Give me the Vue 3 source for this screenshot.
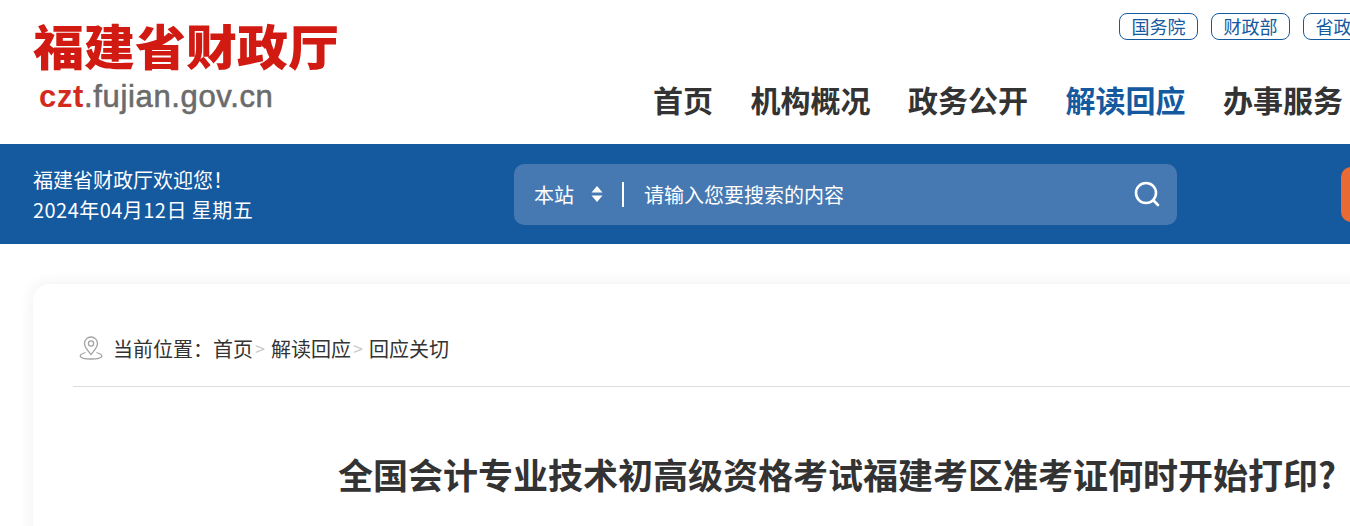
<template>
  <div class="page">
    <header class="top">
      <a class="logo" href="#">
        <span class="logo-name">福建省财政厅</span>
        <span class="logo-url"><b>czt</b>.fujian.gov.cn</span>
      </a>
      <div class="top-right">
        <div class="links">
          <a v-for="item in links" :key="item" class="link-pill" href="#">{{ item }}</a>
        </div>
        <nav class="nav">
          <a
            v-for="item in navs"
            :key="item"
            href="#"
            class="nav-item"
            :class="{ active: item === '解读回应' }"
          >{{ item }}</a>
        </nav>
      </div>
    </header>

    <section class="band">
      <div class="welcome">
        <p>福建省财政厅欢迎您！</p>
        <p class="date">2024年04月12日 星期五</p>
      </div>
      <form class="search" @submit.prevent>
        <span class="scope">本站</span>
        <svg class="scope-arrows" width="12" height="18" viewBox="0 0 12 18">
          <path d="M6 1 L11.5 7.5 H0.5 Z" fill="#fff" />
          <path d="M0.5 10.5 H11.5 L6 17 Z" fill="#fff" />
        </svg>
        <i class="divider"></i>
        <input v-model="keyword" class="search-input" placeholder="请输入您要搜索的内容" />
        <svg class="search-icon" width="26" height="26" viewBox="0 0 26 26" fill="none" stroke="#fff" stroke-linecap="round">
          <circle cx="12" cy="12" r="10" stroke-width="2.6" />
          <path d="M19.5 19.5 L24 24" stroke-width="2.6" />
        </svg>
      </form>
      <a class="orange-btn" href="#"></a>
    </section>

    <main class="card">
      <div class="crumbs">
        <svg class="pin" width="24" height="24" viewBox="0 0 24 24" fill="none" stroke="#a3a3a3" stroke-width="1.3">
          <path d="M12 18.5 C8.5 14 5.5 11.5 5.5 7.5 A6.5 6.5 0 0 1 18.5 7.5 C18.5 11.5 15.5 14 12 18.5 Z" />
          <circle cx="12" cy="7.5" r="2.6" />
          <path d="M6.5 16.5 C3 17.5 1.2 18.8 1.2 20 C1.2 22 6 23 12 23 C18 23 22.8 22 22.8 20 C22.8 18.8 21 17.5 17.5 16.5" />
        </svg>
        <span class="crumb-label">当前位置：</span>
        <template v-for="(c, i) in crumbs" :key="c">
          <a href="#" class="crumb">{{ c }}</a>
          <span v-if="i < crumbs.length - 1" class="crumb-sep">&gt;</span>
        </template>
      </div>
      <h1 class="title">全国会计专业技术初高级资格考试福建考区准考证何时开始打印?</h1>
    </main>
  </div>
</template>

<script setup>
import { ref } from 'vue'

const keyword = ref('')
const links = ['国务院', '财政部', '省政府']
const navs = ['首页', '机构概况', '政务公开', '解读回应', '办事服务']
const crumbs = ['首页', '解读回应', '回应关切']
</script>

<style>
html,
body {
  margin: 0;
  background: #fff;
  overflow: hidden;
}
</style>

<style scoped>
.page {
  width: 1674px;
  font-family: "Noto Sans CJK SC", "Liberation Sans", sans-serif;
  color: #333;
}

a {
  color: inherit;
  text-decoration: none;
}

.top {
  display: flex;
  height: 144px;
  padding-left: 33px;
}

.logo {
  display: flex;
  flex-direction: column;
  width: 620px;
  flex-shrink: 0;
}

.logo-name {
  margin-top: 15px;
  height: 62px;
  font-size: 51px;
  line-height: 62px;
  font-weight: 900;
  color: #d11a12;
  white-space: nowrap;
  transform: scaleY(0.94);
  transform-origin: left top;
}

.logo-url {
  margin-top: 2px;
  padding-left: 6px;
  font-family: "Liberation Sans", sans-serif;
  font-size: 31px;
  line-height: 36px;
  letter-spacing: 0.65px;
  color: #6b6b6b;
  -webkit-text-stroke: 0.6px #6b6b6b;
}

.logo-url b {
  color: #d42a1e;
  -webkit-text-stroke: 0;
}

.links {
  display: flex;
  gap: 13px;
  margin: 13px 0 0 466px;
}

.link-pill {
  box-sizing: border-box;
  width: 79px;
  height: 27px;
  border: 1px solid #155a9f;
  border-radius: 8px;
  font-size: 18px;
  line-height: 25px;
  text-align: center;
  color: #155a9f;
  white-space: nowrap;
}

.nav {
  display: flex;
  gap: 37.5px;
  margin-top: 37px;
}

.nav-item {
  font-size: 30px;
  line-height: 44px;
  font-weight: 700;
  white-space: nowrap;
}

.nav-item.active {
  color: #155a9f;
}

.band {
  display: flex;
  align-items: center;
  height: 100px;
  padding-left: 33px;
  background: #155a9f;
  color: #fff;
}

.welcome {
  width: 481px;
  flex-shrink: 0;
  padding-top: 1px;
  font-size: 20px;
  line-height: 30px;
}

.welcome p {
  margin: 0;
}

.welcome .date {
  letter-spacing: 0.46px;
}

.search {
  box-sizing: border-box;
  display: flex;
  align-items: center;
  width: 663px;
  height: 61px;
  padding: 0 17px 0 20px;
  border-radius: 10px;
  background: #4678b2;
  flex-shrink: 0;
}

.scope {
  font-size: 20px;
}

.scope-arrows {
  margin-left: 17px;
}

.divider {
  width: 2px;
  height: 25px;
  margin: 0 20px 0 19px;
  background: #fff;
}

.search-input {
  flex: 1;
  min-width: 0;
  padding: 0;
  border: 0;
  outline: 0;
  background: transparent;
  font: inherit;
  font-size: 20px;
  color: #fff;
}

.search-input::placeholder {
  color: #fff;
  opacity: 1;
}

.orange-btn {
  width: 120px;
  height: 55px;
  margin-left: 164px;
  border-radius: 10px;
  background: #e96a32;
  flex-shrink: 0;
}

.card {
  box-sizing: border-box;
  width: 1608px;
  height: 400px;
  margin: 40px 0 0 33px;
  padding: 0 40px;
  border-radius: 16px;
  background: #fff;
  box-shadow: 0 0 16px rgba(0, 0, 0, 0.07);
}

.crumbs {
  display: flex;
  align-items: center;
  height: 76px;
  padding: 26px 0 0 6px;
  border-bottom: 1px solid #ddd;
  font-size: 20px;
}

.pin {
  margin-right: 10px;
}

.crumb-sep {
  margin: 0 6px 0 2px;
  font-size: 18px;
  color: #ccc;
}

.title {
  margin: 63px 0 0;
  font-size: 35px;
  line-height: 48px;
  font-weight: 700;
  text-align: center;
  white-space: nowrap;
}
</style>
